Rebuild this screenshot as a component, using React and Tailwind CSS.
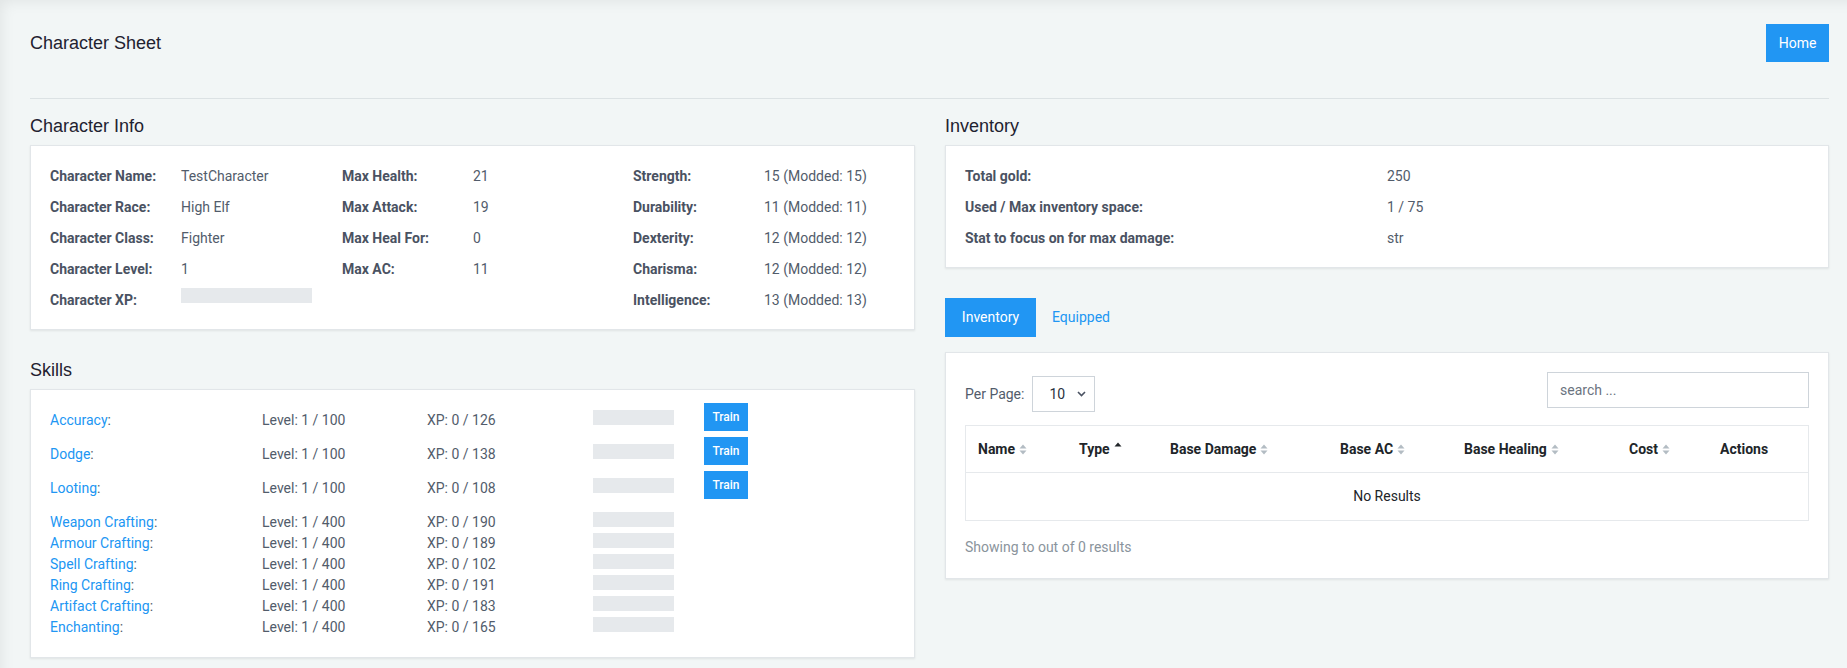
import React from 'react'

const info = [
  [['Character Name:', 'TestCharacter'], ['Max Health:', '21'], ['Strength:', '15 (Modded: 15)']],
  [['Character Race:', 'High Elf'], ['Max Attack:', '19'], ['Durability:', '11 (Modded: 11)']],
  [['Character Class:', 'Fighter'], ['Max Heal For:', '0'], ['Dexterity:', '12 (Modded: 12)']],
  [['Character Level:', '1'], ['Max AC:', '11'], ['Charisma:', '12 (Modded: 12)']],
  [['Character XP:', null], null, ['Intelligence:', '13 (Modded: 13)']],
]

const trainable = [
  ['Accuracy', '1 / 100', '0 / 126'],
  ['Dodge', '1 / 100', '0 / 138'],
  ['Looting', '1 / 100', '0 / 108'],
]

const crafting = [
  ['Weapon Crafting', '1 / 400', '0 / 190'],
  ['Armour Crafting', '1 / 400', '0 / 189'],
  ['Spell Crafting', '1 / 400', '0 / 102'],
  ['Ring Crafting', '1 / 400', '0 / 191'],
  ['Artifact Crafting', '1 / 400', '0 / 183'],
  ['Enchanting', '1 / 400', '0 / 165'],
]

const columns = [
  ['Name', 'both'],
  ['Type', 'up'],
  ['Base Damage', 'both'],
  ['Base AC', 'both'],
  ['Base Healing', 'both'],
  ['Cost', 'both'],
  ['Actions', null],
]

function SortIcon({ mode }) {
  if (mode === 'up') {
    return (
      <svg width="8" height="10" viewBox="0 0 8 10" className="ml-[4px] mb-[5px]">
        <path d="M0.5 4.5 L4 0.5 L7.5 4.5 Z" fill="#212529" />
      </svg>
    )
  }
  return (
    <svg width="8" height="11" viewBox="0 0 8 11" className="ml-[4px]">
      <path d="M0.5 4.5 L4 0.5 L7.5 4.5 Z" fill="#b3bcc3" />
      <path d="M0.5 6.5 L4 10.5 L7.5 6.5 Z" fill="#b3bcc3" />
    </svg>
  )
}

function Heading({ children }) {
  return (
    <h2 className="h-[22px] leading-[22px] text-[18px] text-[#1f2230] mb-2 font-['Liberation_Sans',Arial,sans-serif]">
      {children}
    </h2>
  )
}

function Card({ className = '', children }) {
  return (
    <div className={'bg-white border border-[#e2e6e9] shadow-[0_1px_2px_rgba(0,0,0,0.08)] ' + className}>
      {children}
    </div>
  )
}

// text and bar share the same top; the Train button sits 7px above them
function SkillRow({ skill, train }) {
  const [name, level, xp] = skill
  const off = train ? 'mt-[7px] ' : ''
  return (
    <div className={train ? 'flex items-start h-[28px]' : 'flex items-start h-[21px]'}>
      <div className={off + 'w-[212px] leading-[21px]'}>
        <span className="text-[#2196f3]">{name}</span>:
      </div>
      <div className={off + 'w-[165px] leading-[21px]'}>Level: {level}</div>
      <div className={off + 'w-[166px] leading-[21px]'}>XP: {xp}</div>
      <div className={off + 'w-[81px] h-[15px] bg-[#e6e9ec]'} />
      {train && (
        <button className="ml-[30px] w-[44px] h-[28px] bg-[#2196f3] text-white text-[12px] font-medium">Train</button>
      )}
    </div>
  )
}

export default function App() {
  return (
    <div className="min-h-[668px] bg-[#f2f6f6] shadow-[inset_8px_8px_14px_-6px_rgba(0,0,0,0.07)] pl-[30px] pr-[18px] pt-[24px] pb-[10px] font-['Roboto',sans-serif] text-[14px] text-[#525c6b]">
      <div className="flex items-center justify-between h-[38px]">
        <h1 className="text-[18px] text-[#1f2230] font-['Liberation_Sans',Arial,sans-serif]">Character Sheet</h1>
        <button className="w-[63px] h-[38px] bg-[#2196f3] text-white text-[14px]">Home</button>
      </div>
      <hr className="mt-[36px] mb-[16px] border-0 border-t border-[#dce2e4]" />

      <div className="grid grid-cols-[885px_884px] gap-x-[30px]">
        <div>
          <Heading>Character Info</Heading>
          <Card className="pt-[15px] pb-[13px] px-[19px]">
            {info.map((row, i) => (
              <div key={i} className="grid grid-cols-[292px_291px_1fr] h-[31px] items-center">
                {row.map((cell, j) => (
                  <div key={j} className="flex items-center">
                    {cell && (
                      <>
                        <span className="w-[131px] font-bold text-[#4a5262]">{cell[0]}</span>
                        {cell[1] !== null ? (
                          <span>{cell[1]}</span>
                        ) : (
                          <span className="w-[131px] h-[15px] bg-[#e6e9ec] -mt-[10px]" />
                        )}
                      </>
                    )}
                  </div>
                ))}
              </div>
            ))}
          </Card>

          <div className="mt-[29px]">
            <Heading>Skills</Heading>
            <Card className="pt-[13px] pb-[19px] px-[19px]">
              <div className="flex flex-col gap-[6px]">
                {trainable.map((s) => <SkillRow key={s[0]} skill={s} train />)}
              </div>
              <div className="mt-[13px]">
                {crafting.map((s) => <SkillRow key={s[0]} skill={s} />)}
              </div>
            </Card>
          </div>
        </div>

        <div>
          <Heading>Inventory</Heading>
          <Card className="pt-[15px] pb-[13px] px-[19px]">
            {[
              ['Total gold:', '250'],
              ['Used / Max inventory space:', '1 / 75'],
              ['Stat to focus on for max damage:', 'str'],
            ].map(([k, v]) => (
              <div key={k} className="grid grid-cols-2 h-[31px] items-center">
                <span className="font-bold text-[#4a5262]">{k}</span>
                <span>{v}</span>
              </div>
            ))}
          </Card>

          <div className="flex items-center mt-[30px] h-[39px]">
            <button className="w-[91px] h-[39px] bg-[#2196f3] text-white text-[14px]">Inventory</button>
            <button className="ml-[16px] text-[#2196f3] text-[14px]">Equipped</button>
          </div>

          <Card className="mt-[15px] pt-[19px] pb-[21px] px-[19px]">
            <div className="flex items-start justify-between">
              <div className="flex items-center mt-[4px]">
                <span className="text-[#525c6b]">Per Page:</span>
                <div className="ml-[8px] w-[63px] h-[36px] border border-[#ced4da] flex items-center pl-[16px] pr-[8px] justify-between text-[#2a3140]">
                  <span>10</span>
                  <svg width="9" height="6" viewBox="0 0 9 6">
                    <path d="M1 1 L4.5 4.5 L8 1" stroke="#4a5262" strokeWidth="1.6" fill="none" />
                  </svg>
                </div>
              </div>
              <div className="w-[262px] h-[36px] border border-[#ced4da] flex items-center px-[12px] text-[#6b7480]">
                search ...
              </div>
            </div>

            <div className="mt-[13px] border border-[#e6e9ec]">
              <div className="grid grid-cols-[101px_91px_170px_124px_165px_91px_1fr] h-[47px] items-center border-b border-[#e6e9ec]">
                {columns.map(([c, mode]) => (
                  <div key={c} className="pl-[12px] flex items-center font-bold text-[#212529]">
                    <span>{c}</span>
                    {mode && <SortIcon mode={mode} />}
                  </div>
                ))}
              </div>
              <div className="h-[47px] flex items-center justify-center text-[#212529]">No Results</div>
            </div>

            <div className="mt-[17px] leading-[19px] text-[#8a949c]">Showing to out of 0 results</div>
          </Card>
        </div>
      </div>
    </div>
  )
}
